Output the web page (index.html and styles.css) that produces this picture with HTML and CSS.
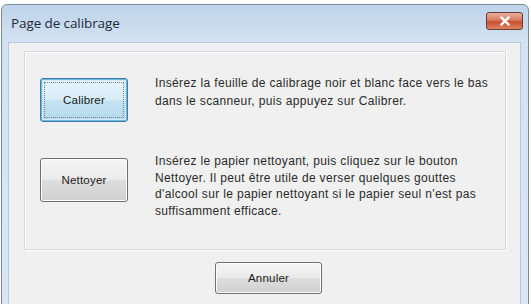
FILE: index.html
```html
<!DOCTYPE html>
<html lang="fr">
<head>
<meta charset="utf-8">
<title>Page de calibrage</title>
<link rel="stylesheet" href="styles.css">
</head>
<body>
<div class="window">
  <div class="titlebar">
    <span class="title">Page de calibrage</span>
    <span class="close">
      <svg width="14" height="10" viewBox="0 0 14 10"><path d="M3.5 1.5 L10.5 8.5 M10.5 1.5 L3.5 8.5" stroke="#fff" stroke-width="2.4" stroke-linecap="square"/></svg>
    </span>
  </div>
  <div class="client">
    <div class="group">
      <div class="row row-first">
        <button class="btn btn-default"><span class="focus">Calibrer</span></button>
        <p class="desc">Insérez la feuille de calibrage noir et blanc face vers le bas<br>dans le scanneur, puis appuyez sur Calibrer.</p>
      </div>
      <div class="row row-second">
        <button class="btn">Nettoyer</button>
        <p class="desc">Insérez le papier nettoyant, puis cliquez sur le bouton<br>Nettoyer. Il peut être utile de verser quelques gouttes<br>d'alcool sur le papier nettoyant si le papier seul n'est pas<br>suffisamment efficace.</p>
      </div>
    </div>
    <div class="footer">
      <button class="btn btn-cancel">Annuler</button>
    </div>
  </div>
</div>
</body>
</html>
```
FILE: styles.css
```css
html, body {
  margin: 0;
  padding: 0;
  background: #ffffff;
}
body {
  width: 531px;
  height: 304px;
  overflow: hidden;
  font-family: "Liberation Sans", Arial, sans-serif;
}
.window {
  margin: 4px 0 0 1px;
  width: 528px;
  height: 310px;
  box-sizing: border-box;
  border: 1px solid #7d8a98;
  border-radius: 6px 6px 0 0;
  background: linear-gradient(to bottom, #bfd4ea 0px, #c9dbee 20px, #d3e2f2 36px, #d9e7f5 100%);
  display: flex;
  flex-direction: column;
}
.titlebar {
  height: 35px;
  display: flex;
  align-items: center;
  justify-content: space-between;
  padding: 0 5px 2px 9px;
}
.title {
  font-family: "Open Sans", "Noto Sans", sans-serif;
  font-size: 13.5px;
  color: #1e2a3a;
  letter-spacing: -0.1px;
}
.close {
  align-self: flex-start;
  width: 35px;
  height: 16px;
  margin-top: 7px;
  border: 1px solid #6b3a34;
  border-radius: 3px;
  background: linear-gradient(to bottom, #eab09e 0%, #da7a60 45%, #c8502f 55%, #dc8463 100%);
  display: flex;
  align-items: center;
  justify-content: center;
}
.client {
  flex: 1;
  margin: 0 7px 0 6px;
  background: #f0f0f0;
  border: 1px solid #b7c8da;
  border-bottom: none;
  padding: 8px 14px 0 15px;
  display: flex;
  flex-direction: column;
}
.group {
  height: 199px;
  box-sizing: border-box;
  border: 1px solid #d5d9dd;
  box-shadow: inset 1px 1px 0 #ffffff, 1px 1px 0 #ffffff;
  padding: 0 0 0 15px;
}
.row {
  display: flex;
  align-items: flex-start;
  gap: 27px;
}
.row-first {
  padding-top: 26px;
}
.row-second {
  padding-top: 36px;
}
.btn {
  width: 88px;
  height: 44px;
  padding: 0;
  font-family: "Liberation Sans", Arial, sans-serif;
  font-size: 11.5px;
  letter-spacing: 0.2px;
  color: #1a1a1a;
  border: 1px solid #707070;
  border-radius: 3px;
  background: linear-gradient(to bottom, #f4f4f4 0%, #ebebeb 48%, #dddddd 52%, #d0d0d0 100%);
  box-shadow: inset 0 0 0 1px #fcfcfc;
  flex-shrink: 0;
  display: flex;
  align-items: center;
  justify-content: center;
}
.btn-default {
  border-color: #3c7fb1;
  background: linear-gradient(to bottom, #e9f4fa 0%, #d8ecf6 48%, #c4e2f1 52%, #b4d8ea 100%);
  box-shadow: inset 0 0 0 1px #6fb6d6, inset 0 0 0 2px #d3ebf5;
  padding: 3px;
  box-sizing: border-box;
}
.focus {
  flex: 1;
  align-self: stretch;
  display: flex;
  align-items: center;
  justify-content: center;
  border: 1px dotted #6a8796;
}
.desc {
  margin: 0;
  font-size: 12px;
  letter-spacing: 0.35px;
  line-height: 16.5px;
  color: #2a2a2a;
  white-space: nowrap;
}
.row-first .desc {
  margin-top: -4px;
  line-height: 18px;
}
.row-second .desc {
  margin-top: -5px;
}
.footer {
  display: flex;
  padding: 12px 0 0 191px;
}
.btn-cancel {
  width: 107px;
  height: 32px;
}
```
